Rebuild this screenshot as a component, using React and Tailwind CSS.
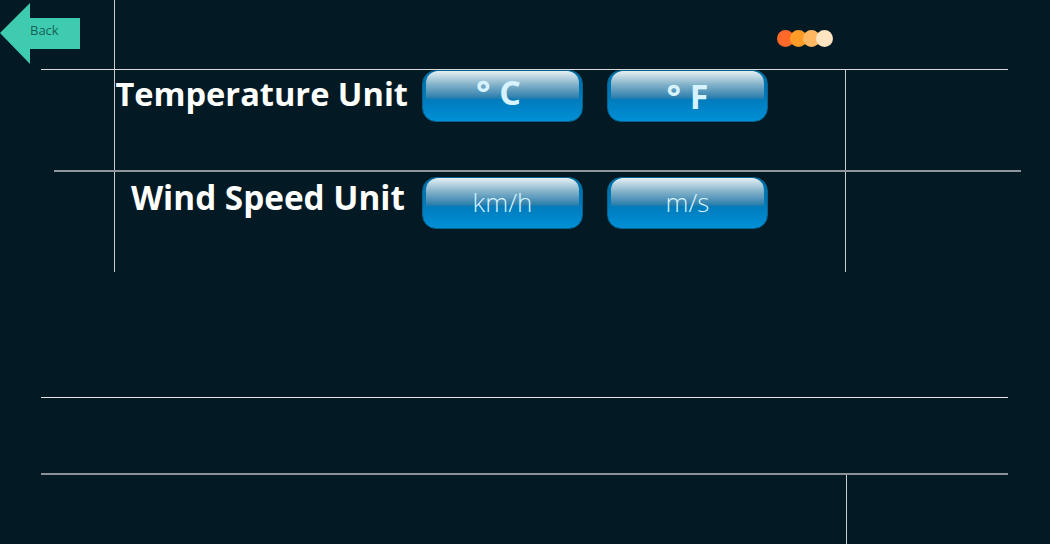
const GlossButton = ({ children, className }) => (
  <button className="relative w-[161px] h-[52px] rounded-[14px] bg-gradient-to-b from-[#0070a8] via-[#0078b8] to-[#0090d6] border border-[#05628f] overflow-hidden">
    <span className="absolute left-[3px] right-[3px] top-0 h-[28px] rounded-t-[12px] bg-gradient-to-b from-[#e6f0f3] via-[#7fb0c8] to-[#1a7aab]" />
    <span className={`relative block text-[#d6f3ff] font-['Open_Sans',sans-serif] leading-none ${className}`}>
      {children}
    </span>
  </button>
);

const BackArrow = () => (
  <div className="relative w-[80px] h-[62px]">
    <svg width="80" height="62" viewBox="0 0 80 62" className="absolute inset-0">
      <polygon points="0,31 30,1 30,16 80,16 80,47 30,47 30,62" fill="#3ecbb0" />
    </svg>
    <span className="absolute left-[30px] top-[22px] text-[13px] leading-none text-[#176257] font-['Open_Sans',sans-serif]">
      Back
    </span>
  </div>
);

const dots = ['#ff6a2a', '#ff9c28', '#ffb761', '#ffe4c2'];

export default function App() {
  return (
    <div className="relative w-[1050px] h-[544px] bg-[#031a24] overflow-hidden font-['Open_Sans',sans-serif]">
      {/* grid lines */}
      <div className="absolute left-[114px] top-0 w-px h-[272px] bg-[#c9cdd0]" />
      <div className="absolute left-[845px] top-[69px] w-px h-[203px] bg-[#c9cdd0]" />
      <div className="absolute left-[846px] top-[473px] w-px h-[71px] bg-[#c9cdd0]" />
      <div className="absolute left-[41px] top-[69px] w-[967px] h-px bg-[#d8dadc]" />
      <div className="absolute left-[54px] top-[170px] w-[967px] h-[2px] bg-[#8d979c]" />
      <div className="absolute left-[41px] top-[397px] w-[967px] h-px bg-[#e4e6e8]" />
      <div className="absolute left-[41px] top-[473px] w-[967px] h-[2px] bg-[#8a9296]" />

      <div className="relative flex flex-col">
        <div className="flex items-start h-[70px] pt-[2px]">
          <BackArrow />
          <div className="flex ml-[697px] mt-[28px]">
            {dots.map((c, i) => (
              <span
                key={c}
                className={`w-[17px] h-[17px] rounded-full ${i > 0 ? '-ml-[4px]' : ''}`}
                style={{ backgroundColor: c }}
              />
            ))}
          </div>
        </div>

        <div className="flex items-center ml-[108px] h-[52px]">
          <div className="w-[300px] text-right text-white font-bold text-[32.6px] leading-none pb-[4px] whitespace-nowrap">
            Temperature Unit
          </div>
          <div className="flex gap-[24px] ml-[14px]">
            <GlossButton className="font-bold text-[34px] pb-[9px] pr-[8px]">° C</GlossButton>
            <GlossButton className="font-bold text-[34px] pb-[0px]">° F</GlossButton>
          </div>
        </div>

        <div className="flex items-center ml-[108px] h-[52px] mt-[55px]">
          <div className="w-[297px] text-right text-white font-bold text-[33.3px] leading-none pb-[10px] whitespace-nowrap">
            Wind Speed Unit
          </div>
          <div className="flex gap-[24px] ml-[17px]">
            <GlossButton className="font-light text-[26px] pb-[3px]">km/h</GlossButton>
            <GlossButton className="font-light text-[26px] pb-[3px]">m/s</GlossButton>
          </div>
        </div>
      </div>
    </div>
  );
}
